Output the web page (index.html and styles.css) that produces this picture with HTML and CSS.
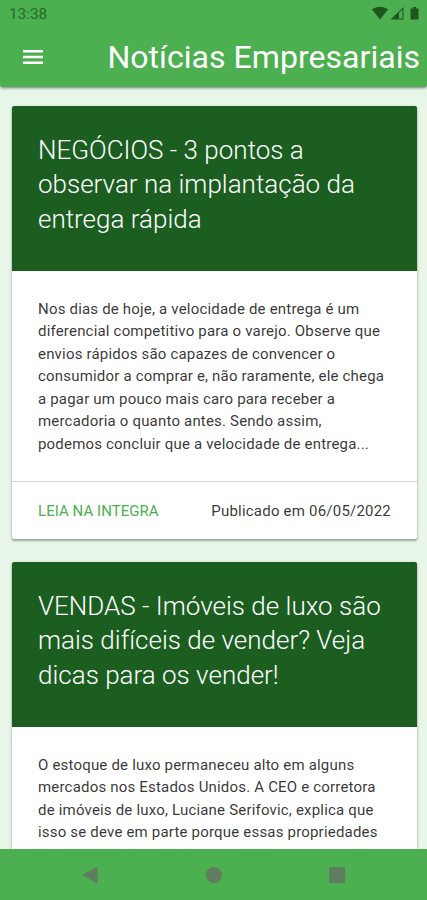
FILE: index.html
```html
<!DOCTYPE html>
<html lang="pt-br">

<head>
  <meta charset="UTF-8" />
  <meta name="viewport" content="width=device-width, initial-scale=1.0" />
  <title>Notícias Empresariais</title>
  <link rel="stylesheet" href="styles.css">
</head>

<body>
  <header class="topo">
    <div class="status-bar">
      <span class="hora">13:38</span>
      <svg class="status-icons" width="50" height="16" viewBox="0 0 50 16">
        <path d="M0 3.600C4.800-.2 11.200-.2 16 3.600L8 13.500z" />
        <path d="M18.500 13.500L31.500 1v12.500zM27 6.800v5.700h3.500V3.500z" fill-rule="evenodd" />
        <path d="M38.500 2.500h2.300V1h3.400v1.500h2.300v11h-8z" />
      </svg>
    </div>
    <nav class="navbar">
      <button class="menu" aria-label="Menu">
        <svg width="20" height="14" viewBox="0 0 20 14">
          <path d="M0 0h20v2.600H0zM0 5.700h20v2.600H0zM0 11.400h20V14H0z" />
        </svg>
      </button>
      <h1 class="titulo">Notícias Empresariais</h1>
    </nav>
  </header>

  <main class="noticias">
    <article class="card">
      <h2 class="card-title">NEGÓCIOS - 3 pontos a<br>observar na implantação da<br>entrega rápida</h2>
      <p class="card-content">Nos dias de hoje, a velocidade de entrega é um<br>
        diferencial competitivo para o varejo. Observe que<br>
        envios rápidos são capazes de convencer o<br>
        consumidor a comprar e, não raramente, ele chega<br>
        a pagar um pouco mais caro para receber a<br>
        mercadoria o quanto antes. Sendo assim,<br>
        podemos concluir que a velocidade de entrega...</p>
      <div class="card-action">
        <a class="leia">LEIA NA INTEGRA</a>
        <span class="data">Publicado em 06/05/2022</span>
      </div>
    </article>

    <article class="card">
      <h2 class="card-title">VENDAS - Imóveis de luxo são<br>mais difíceis de vender? Veja<br>dicas para os vender!</h2>
      <p class="card-content">O estoque de luxo permaneceu alto em alguns<br>
        mercados nos Estados Unidos. A CEO e corretora<br>
        de imóveis de luxo, Luciane Serifovic, explica que<br>
        isso se deve em parte porque essas propriedades</p>
    </article>
  </main>

  <!-- Botões do sistema -->
  <footer class="botoes">
    <svg width="16" height="18" viewBox="0 0 16 18"><path d="M0 9L15.500.5v17z" /></svg>
    <svg width="16" height="16" viewBox="0 0 16 16"><circle cx="8" cy="8" r="8" /></svg>
    <svg width="16" height="16" viewBox="0 0 16 16"><rect width="16" height="16" rx="1" /></svg>
  </footer>
</body>

</html>
```

FILE: styles.css
```css
* {
  box-sizing: border-box;
}

body {
  display: flex;
  flex-direction: column;
  height: 100vh;
  margin: 0;
  overflow: hidden;
  background-color: #e8f5e9;
  font-family: Roboto, sans-serif;
  color: rgba(0, 0, 0, 0.8);
}

/* Topo */
.topo {
  flex: none;
  height: 87px;
  border-radius: 0 0 3px 3px;
  background-color: #4caf50;
  box-shadow: 0 1px 3px rgba(0, 0, 0, 0.5);
}

.status-bar {
  display: flex;
  justify-content: space-between;
  height: 28px;
  padding: 6px 6px 0 9px;
}

.hora {
  font-size: 15.300px;
  line-height: 17px;
  color: #286a2b;
}

.status-icons {
  margin-right: -1px;
  fill: #20551f;
}

.navbar {
  display: flex;
  align-items: center;
  justify-content: space-between;
  height: 58px;
  padding: 0 7px 0 23px;
}

.menu {
  display: flex;
  padding: 0;
  border: none;
  background: none;
}

.menu svg {
  fill: #fff;
}

.titulo {
  margin: 0;
  font-size: 32.100px;
  font-weight: 400;
  line-height: 58px;
  color: #fff;
  white-space: nowrap;
}

/* Cards */
.noticias {
  flex: 1;
  min-height: 0;
  overflow: hidden;
  padding: 19px 10px 0 12px;
}

.card {
  margin-bottom: 23px;
  border-radius: 2px;
  background-color: #fff;
  box-shadow: 0 2px 2px rgba(0, 0, 0, 0.2), 0 1px 3px rgba(0, 0, 0, 0.25);
}

.card-title {
  height: 165px;
  margin: 0;
  padding: 26.600px 26px 0;
  border-radius: 2px 2px 0 0;
  background-color: #1b5e20;
  font-size: 26px;
  font-weight: 300;
  line-height: 34.700px;
  color: #fff;
  white-space: nowrap;
}

.card-content {
  height: 210px;
  margin: 0;
  padding: 26.700px 26px 0;
  font-size: 15px;
  line-height: 22.500px;
  letter-spacing: 0.19px;
  white-space: nowrap;
}

.card-action {
  display: flex;
  align-items: center;
  justify-content: space-between;
  height: 58px;
  padding: 0 26px;
  border-top: 1px solid rgba(0, 0, 0, 0.16);
  font-size: 15px;
}

.leia {
  letter-spacing: 0.05px;
  color: #4caf50;
}

.data {
  letter-spacing: 0.21px;
}

/* Botões do sistema */
.botoes {
  display: flex;
  flex: none;
  align-items: center;
  justify-content: space-between;
  height: 51px;
  padding: 0 82px;
  background-color: #4caf50;
}

.botoes svg {
  fill: #617d61;
}
```
